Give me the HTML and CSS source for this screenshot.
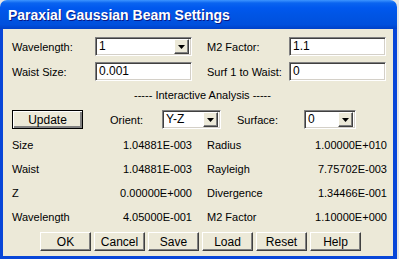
FILE: index.html
```html
<!DOCTYPE html>
<html lang="en">

<head>
    <meta charset="UTF-8">
    <title>Paraxial Gaussian Beam Settings</title>
    <link rel="stylesheet" href="styles.css">
</head>

<body>

    <div class="window">
        <div class="titlebar">Paraxial Gaussian Beam Settings</div>

        <div class="client">
            <div class="form-grid">
                <label>Wavelength:</label>
                <div class="combo"><span class="combo-value">1</span><span class="combo-arrow"><svg width="7" height="4" viewBox="0 0 7 4"><path d="M0 0h7L3.5 4z" fill="#000"/></svg></span></div>
                <span></span>
                <label>M2 Factor:</label>
                <div class="field">1.1</div>

                <label>Waist Size:</label>
                <div class="field">0.001</div>
                <span></span>
                <label>Surf 1 to Waist:</label>
                <div class="field">0</div>
            </div>

            <div class="section-title">----- Interactive Analysis -----</div>

            <div class="analysis-row">
                <button class="btn btn-default update-btn">Update</button>
                <label class="orient-label">Orient:</label>
                <div class="combo orient-combo"><span class="combo-value">Y-Z</span><span class="combo-arrow"><svg width="7" height="4" viewBox="0 0 7 4"><path d="M0 0h7L3.5 4z" fill="#000"/></svg></span></div>
                <label class="surface-label">Surface:</label>
                <div class="combo surface-combo"><span class="combo-value">0</span><span class="combo-arrow"><svg width="7" height="4" viewBox="0 0 7 4"><path d="M0 0h7L3.5 4z" fill="#000"/></svg></span></div>
            </div>

            <div class="data-grid">
                <div class="data-item"><span>Size</span><span>1.04881E-003</span></div>
                <div class="data-item"><span>Radius</span><span>1.00000E+010</span></div>
                <div class="data-item"><span>Waist</span><span>1.04881E-003</span></div>
                <div class="data-item"><span>Rayleigh</span><span>7.75702E-003</span></div>
                <div class="data-item"><span>Z</span><span>0.00000E+000</span></div>
                <div class="data-item"><span>Divergence</span><span>1.34466E-001</span></div>
                <div class="data-item"><span>Wavelength</span><span>4.05000E-001</span></div>
                <div class="data-item"><span>M2 Factor</span><span>1.10000E+000</span></div>
            </div>

            <div class="button-row">
                <button class="btn">OK</button>
                <button class="btn">Cancel</button>
                <button class="btn">Save</button>
                <button class="btn">Load</button>
                <button class="btn">Reset</button>
                <button class="btn">Help</button>
            </div>
        </div>
    </div>

</body>

</html>
```

FILE: styles.css
```css
html,
body {
    margin: 0;
    padding: 0;
    background: #e6e6e6;
}

body {
    font-family: "Liberation Sans", Arial, sans-serif;
    font-size: 11px;
    color: #000;
}

.window {
    width: 397px;
    height: 259px;
    display: flex;
    flex-direction: column;
}

.titlebar {
    height: 29px;
    box-sizing: border-box;
    padding: 0 8px;
    line-height: 30px;
    border-radius: 7px 7px 0 0;
    background: linear-gradient(to bottom, #3d95ff 0, #0a64f0 3px, #0058ee 8px, #0055e5 50%, #0050dd 85%, #0041c8 100%);
    color: #fff;
    font-weight: bold;
    font-size: 14px;
    text-shadow: 1px 1px #0a1883;
}

.client {
    flex: 1;
    background: #ece9d8;
    border-left: 3px solid #0846d8;
    border-right: 4px solid #0846d8;
    border-bottom: 3px solid #0846d8;
    padding: 8px 0 0 9px;
}

/* 輸入區 */
.form-grid {
    display: grid;
    grid-template-columns: 83px 97px 15px 82px 97px;
    grid-auto-rows: 19px;
    row-gap: 6px;
    align-items: center;
}

.field,
.combo {
    height: 19px;
    box-sizing: border-box;
    background: #fff;
    border: 1px solid;
    border-color: #808080 #fff #fff #808080;
    box-shadow: inset 1px 1px #404040, inset -1px -1px #d4d0c8;
    padding: 0 3px;
    line-height: 17px;
    font-size: 12px;
}

.combo {
    display: flex;
    justify-content: space-between;
    padding-right: 2px;
}

.combo-arrow {
    width: 15px;
    height: 15px;
    margin-top: 1px;
    box-sizing: border-box;
    background: #ece9d8;
    border: 1px solid;
    border-color: #fff #404040 #404040 #fff;
    box-shadow: inset -1px -1px #808080;
    display: flex;
    align-items: center;
    justify-content: center;
}

.section-title {
    height: 16px;
    line-height: 16px;
    margin-top: 6px;
    text-align: center;
}

.analysis-row {
    display: flex;
    align-items: center;
    margin-top: 7px;
    height: 19px;
}

.orient-label {
    margin-left: 27px;
    width: 52px;
}

.orient-combo {
    width: 59px;
}

.surface-label {
    margin-left: 16px;
    width: 67px;
}

.surface-combo {
    width: 52px;
}

/* 結果 */
.data-grid {
    display: grid;
    grid-template-columns: 180px 180px;
    column-gap: 15px;
    grid-auto-rows: 24px;
    margin-top: 4px;
}

.data-item {
    display: flex;
    justify-content: space-between;
    align-items: center;
}

.button-row {
    display: flex;
    gap: 3px;
    margin-top: 3px;
    padding-left: 28px;
}

.btn {
    width: 51px;
    height: 19px;
    padding: 0;
    margin: 0;
    font-family: inherit;
    font-size: 12px;
    color: #000;
    background: #ece9d8;
    border: 1px solid;
    border-color: #fff #404040 #404040 #fff;
    box-shadow: inset -1px -1px #808080;
}

.btn-default {
    border: 1px solid #000;
    box-shadow: inset 1px 1px #fff, inset -2px -2px #808080, inset -1px -1px #404040;
}

.update-btn {
    width: 71px;
}
```
